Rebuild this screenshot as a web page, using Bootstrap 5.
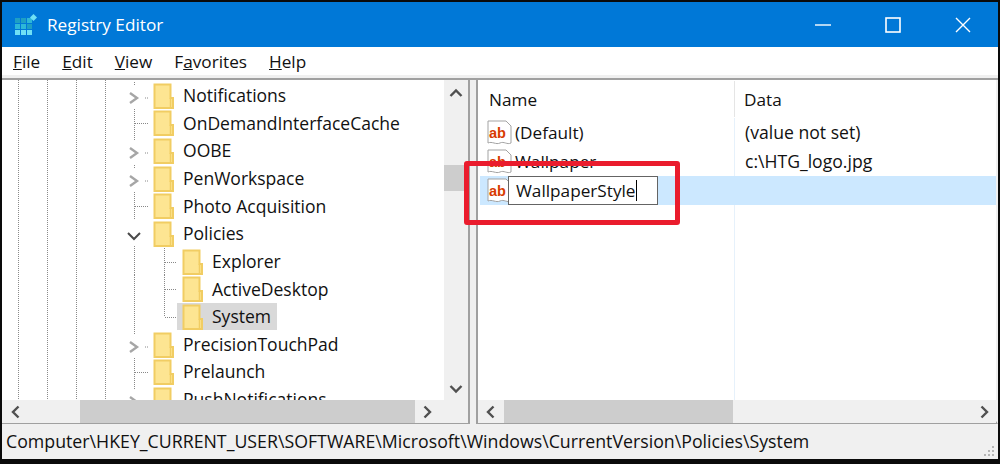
<!DOCTYPE html>
<html lang="en">
<head>
    <meta charset="UTF-8">
    <meta name="viewport" content="width=device-width, initial-scale=1.0">
    <title>Registry Editor</title>
    <link rel="stylesheet" href="https://cdn.jsdelivr.net/npm/bootstrap@5.3.3/dist/css/bootstrap.min.css">
    <style>
        html, body { height: 464px; overflow: hidden; background: #000; }
        body { margin: 0; font-family: "Open Sans", "Liberation Sans", sans-serif; font-size: 17.2px; color: #111; line-height: 1; }

        .win { width: 1000px; height: 464px; padding: 2px 2px 3px; background: #0a0a0a; }

        .titlebar { height: 45px; background: #0078d7; color: #fff; font-size: 17.2px; }
        .titlebar .app-ico { margin: 0 10px 0 13px; }
        .win-btn { width: 70px; height: 45px; }

        .menubar { height: 31px; background: #fff; border-bottom: 3px solid #f0f0f0; padding-top: 2px; }
        .menu-item { padding: 0 11px; }

        .panes { height: 346px; background: #f0f0f0; border-top: 2px solid #a0a0a0; }
        .pane { background: #fff; height: 100%; border-bottom: 3px solid #a0a0a0; }
        .pane-left { width: 468px; border-right: 2px solid #a0a0a0; grid-template-columns: 1fr 24px; grid-template-rows: 320px 23px; }
        .pane-right { width: 522px; margin-left: 6px; border-left: 2px solid #a0a0a0; border-right: 2px solid #f0f0f0; grid-template-rows: 320px 23px; }

        /* tree, the four outer guides are one background */
        .tree {
            padding: 2px 0 0 118px;
            font-size: 17.55px;
            background-image:
                repeating-linear-gradient(to bottom, #8a8a8a 0 1px, transparent 1px 2px),
                repeating-linear-gradient(to bottom, #8a8a8a 0 1px, transparent 1px 2px),
                repeating-linear-gradient(to bottom, #8a8a8a 0 1px, transparent 1px 2px),
                repeating-linear-gradient(to bottom, #8a8a8a 0 1px, transparent 1px 2px);
            background-size: 1px 100%;
            background-position: 16px 0, 45px 0, 74px 0, 103px 0;
            background-repeat: no-repeat;
        }
        .tree-row { height: 27.65px; flex: none; }
        .cell-a { width: 28px; height: 28px; flex: none; }
        .cell-b { width: 29px; height: 28px; flex: none; }
        .tree-label { height: 27px; padding: 0 6px 0 5px; gap: 9px; white-space: nowrap; }
        .tree-label.picked { background: #d9d9d9; }
        .folder { width: 21px; height: 26px; flex: none; }

        /* scrollbars */
        .bar-v { background: #f0f0f0; grid-row: 1 / 3; grid-column: 2; grid-template-rows: 85px 25px 1fr; }
        .bar-h { background: #f0f0f0; }
        .bar-btn { width: 24px; height: 100%; flex: none; }
        .bar-thumb { background: #cdcdcd; }
        .left-pad { width: 54px; }
        .thumb-l { width: 335px; height: 100%; }
        .thumb-r { width: 229px; height: 100%; margin-left: 2px; }

        /* list */
        .list-head { height: 38px; }
        .col-name { width: 257px; padding: 2px 0 0 11px; height: 36px; border-right: 1px solid #e5e5e5; }
        .col-data { padding: 2px 0 0 9px; }
        .list-body {
            background-image: linear-gradient(#e6f1fb, #e6f1fb);
            background-size: 1px 100%;
            background-position: 256px 0;
            background-repeat: no-repeat;
        }
        .val-row { height: 29px; margin-left: 2px; }
        .val-row.active-row { background: #cce8ff; }
        .val-name { width: 255px; padding-left: 7px; gap: 3px; white-space: nowrap; }
        .val-data { padding-left: 10px; font-size: 17.6px; }
        .ab-ico { width: 25px; height: 26px; flex: none; }
        .rename-box { width: 150px; height: 29px; margin-left: -7px; background: #fff; border: 1px solid #646464; padding-left: 7px; position: relative; z-index: 1; }
        .caret-line { width: 1px; height: 21px; background: #000; }
        .red-frame { left: -14px; top: 81px; width: 216px; height: 64px; border: 5px solid #ea1c2d; border-radius: 3px; z-index: 2; }

        .statusbar { height: 35px; background: #f0f0f0; padding-left: 4px; white-space: nowrap; font-size: 17.75px; }
        .grip { right: 2px; bottom: 1px; }
    </style>
</head>
<body>

<svg width="0" height="0" class="position-absolute">
    <defs>
        <symbol id="ico-folder" viewBox="0 0 21 26">
            <path d="M1.5 1.5H17.5V15H20V25H1.5Z" fill="#fde592" stroke="#f1cd63" stroke-width="2"/>
            <path d="M17.5 15V25" stroke="#f1cd63" stroke-width="1.5"/>
        </symbol>
        <symbol id="tw-closed" viewBox="0 0 28 28">
            <path d="M14.5 0V3" stroke="#888" stroke-dasharray="1 1"/>
            <path d="M10 11L17 16L10 21" fill="none" stroke="#a6a6a6" stroke-width="2.4"/>
            <path d="M25 16H29" stroke="#888" stroke-dasharray="1 1"/>
        </symbol>
        <symbol id="tw-open" viewBox="0 0 28 28">
            <path d="M8 13L14 19L20 13" fill="none" stroke="#4a4a4a" stroke-width="2"/>
            <path d="M14.5 26V28" stroke="#888" stroke-dasharray="1 1"/>
        </symbol>
        <symbol id="tw-leaf" viewBox="0 0 28 28">
            <path d="M14.5 0V28" stroke="#888" stroke-dasharray="1 1"/>
            <path d="M15 14.5H29" stroke="#888" stroke-dasharray="1 1"/>
        </symbol>
        <symbol id="tw-pass" viewBox="0 0 28 28">
            <path d="M14.5 0V28" stroke="#888" stroke-dasharray="1 1"/>
        </symbol>
        <symbol id="tw-child" viewBox="0 0 29 28">
            <path d="M16.5 0V28" stroke="#888" stroke-dasharray="1 1"/>
            <path d="M17 14.5H29" stroke="#888" stroke-dasharray="1 1"/>
        </symbol>
        <symbol id="tw-child-end" viewBox="0 0 29 28">
            <path d="M16.5 0V14" stroke="#888" stroke-dasharray="1 1"/>
            <path d="M17 14.5H29" stroke="#888" stroke-dasharray="1 1"/>
        </symbol>
        <symbol id="ico-ab" viewBox="0 0 25 26">
            <path d="M1 1H19L24 6V23C20 25 17 21 13 23C9 25 5 21 1 23Z" fill="#fff" stroke="#a3a3a3"/>
            <text x="2" y="18" font-family="Liberation Sans" font-weight="700" font-size="14.5" fill="#d83b01">ab</text>
        </symbol>
    </defs>
</svg>

<div class="win d-flex flex-column">

    <div class="titlebar d-flex align-items-center">
        <svg class="app-ico" width="22" height="22" viewBox="0 0 22 22">
            <rect x="0" y="4" width="5" height="5" fill="#1e9fc4"/>
            <rect x="6" y="4" width="5" height="5" fill="#1e9fc4"/>
            <rect x="12" y="4" width="5" height="5" fill="#2db7d8"/>
            <rect x="0" y="10" width="5" height="5" fill="#2db7d8"/>
            <rect x="6" y="10" width="5" height="5" fill="#2db7d8"/>
            <rect x="12" y="10" width="5" height="5" fill="#1e9fc4"/>
            <rect x="0" y="16" width="5" height="5" fill="#6fe0f5"/>
            <rect x="6" y="16" width="5" height="5" fill="#6fe0f5"/>
            <rect x="12" y="16" width="5" height="5" fill="#6fe0f5"/>
            <path d="M18.5 0L22 3.5L18.5 7L15 3.5Z" fill="#6fe0f5"/>
        </svg>
        <span class="flex-grow-1">Registry Editor</span>
        <div class="win-btn d-flex align-items-center justify-content-center">
            <svg width="16" height="16" viewBox="0 0 16 16"><path d="M0 8H16" stroke="#fff" stroke-width="1.4"/></svg>
        </div>
        <div class="win-btn d-flex align-items-center justify-content-center">
            <svg width="16" height="16" viewBox="0 0 16 16"><rect x="1" y="1" width="14" height="14" fill="none" stroke="#fff" stroke-width="1.6"/></svg>
        </div>
        <div class="win-btn d-flex align-items-center justify-content-center">
            <svg width="16" height="16" viewBox="0 0 16 16"><path d="M1 1L15 15M15 1L1 15" stroke="#fff" stroke-width="1.4"/></svg>
        </div>
    </div>

    <nav class="menubar d-flex align-items-center">
        <span class="menu-item"><u>F</u>ile</span>
        <span class="menu-item"><u>E</u>dit</span>
        <span class="menu-item"><u>V</u>iew</span>
        <span class="menu-item">F<u>a</u>vorites</span>
        <span class="menu-item"><u>H</u>elp</span>
    </nav>

    <div class="panes d-flex">

        <div class="pane pane-left d-grid">
            <div class="tree d-flex flex-column overflow-hidden">
                <div class="tree-row d-flex align-items-center">
                    <svg class="cell-a"><use href="#tw-closed"/></svg>
                    <div class="tree-label d-flex align-items-center"><svg class="folder"><use href="#ico-folder"/></svg>Notifications</div>
                </div>
                <div class="tree-row d-flex align-items-center">
                    <svg class="cell-a"><use href="#tw-leaf"/></svg>
                    <div class="tree-label d-flex align-items-center"><svg class="folder"><use href="#ico-folder"/></svg>OnDemandInterfaceCache</div>
                </div>
                <div class="tree-row d-flex align-items-center">
                    <svg class="cell-a"><use href="#tw-closed"/></svg>
                    <div class="tree-label d-flex align-items-center"><svg class="folder"><use href="#ico-folder"/></svg>OOBE</div>
                </div>
                <div class="tree-row d-flex align-items-center">
                    <svg class="cell-a"><use href="#tw-closed"/></svg>
                    <div class="tree-label d-flex align-items-center"><svg class="folder"><use href="#ico-folder"/></svg>PenWorkspace</div>
                </div>
                <div class="tree-row d-flex align-items-center">
                    <svg class="cell-a"><use href="#tw-leaf"/></svg>
                    <div class="tree-label d-flex align-items-center"><svg class="folder"><use href="#ico-folder"/></svg>Photo Acquisition</div>
                </div>
                <div class="tree-row d-flex align-items-center">
                    <svg class="cell-a"><use href="#tw-open"/></svg>
                    <div class="tree-label d-flex align-items-center"><svg class="folder"><use href="#ico-folder"/></svg>Policies</div>
                </div>
                <div class="tree-row d-flex align-items-center">
                    <svg class="cell-a"><use href="#tw-pass"/></svg>
                    <svg class="cell-b"><use href="#tw-child"/></svg>
                    <div class="tree-label d-flex align-items-center"><svg class="folder"><use href="#ico-folder"/></svg>Explorer</div>
                </div>
                <div class="tree-row d-flex align-items-center">
                    <svg class="cell-a"><use href="#tw-pass"/></svg>
                    <svg class="cell-b"><use href="#tw-child"/></svg>
                    <div class="tree-label d-flex align-items-center"><svg class="folder"><use href="#ico-folder"/></svg>ActiveDesktop</div>
                </div>
                <div class="tree-row d-flex align-items-center">
                    <svg class="cell-a"><use href="#tw-pass"/></svg>
                    <svg class="cell-b"><use href="#tw-child-end"/></svg>
                    <div class="tree-label picked d-flex align-items-center"><svg class="folder"><use href="#ico-folder"/></svg>System</div>
                </div>
                <div class="tree-row d-flex align-items-center">
                    <svg class="cell-a"><use href="#tw-closed"/></svg>
                    <div class="tree-label d-flex align-items-center"><svg class="folder"><use href="#ico-folder"/></svg>PrecisionTouchPad</div>
                </div>
                <div class="tree-row d-flex align-items-center">
                    <svg class="cell-a"><use href="#tw-leaf"/></svg>
                    <div class="tree-label d-flex align-items-center"><svg class="folder"><use href="#ico-folder"/></svg>Prelaunch</div>
                </div>
                <div class="tree-row d-flex align-items-center">
                    <svg class="cell-a"><use href="#tw-closed"/></svg>
                    <div class="tree-label d-flex align-items-center"><svg class="folder"><use href="#ico-folder"/></svg>PushNotifications</div>
                </div>
            </div>

            <div class="bar-v d-flex flex-column justify-content-between position-relative">
                <div class="d-flex align-items-start justify-content-center pt-2">
                    <svg width="14" height="10" viewBox="0 0 14 10"><path d="M1.5 8L7 2.5L12.5 8" fill="none" stroke="#505050" stroke-width="2.4"/></svg>
                </div>
                <div class="bar-thumb position-absolute w-100" style="top: 85px; height: 26px"></div>
                <div class="d-flex justify-content-center" style="padding-bottom: 29px">
                    <svg width="14" height="10" viewBox="0 0 14 10"><path d="M1.5 2L7 7.5L12.5 2" fill="none" stroke="#505050" stroke-width="2.4"/></svg>
                </div>
            </div>

            <div class="bar-h d-flex" style="grid-row: 2; grid-column: 1">
                <div class="left-pad d-flex align-items-center ps-2">
                    <svg width="11" height="14" viewBox="0 0 11 14"><path d="M8.5 1.5L3 7L8.5 12.5" fill="none" stroke="#505050" stroke-width="2.4"/></svg>
                </div>
                <div class="bar-thumb thumb-l" style="margin-left: 24px"></div>
                <div class="bar-btn d-flex align-items-center justify-content-center">
                    <svg width="11" height="14" viewBox="0 0 11 14"><path d="M2.5 1.5L8 7L2.5 12.5" fill="none" stroke="#505050" stroke-width="2.4"/></svg>
                </div>
            </div>
        </div>

        <div class="pane pane-right d-grid position-relative">
            <div class="overflow-hidden">
                <div class="list-head d-flex align-items-center">
                    <div class="col-name d-flex align-items-center">Name</div>
                    <div class="col-data">Data</div>
                </div>
                <div class="list-body" style="height: 282px">
                    <div class="val-row d-flex align-items-center">
                        <div class="val-name d-flex align-items-center"><svg class="ab-ico"><use href="#ico-ab"/></svg>(Default)</div>
                        <div class="val-data">(value not set)</div>
                    </div>
                    <div class="val-row d-flex align-items-center">
                        <div class="val-name d-flex align-items-center"><svg class="ab-ico"><use href="#ico-ab"/></svg>Wallpaper</div>
                        <div class="val-data">c:\HTG_logo.jpg</div>
                    </div>
                    <div class="val-row active-row d-flex align-items-center">
                        <div class="val-name d-flex align-items-center">
                            <svg class="ab-ico"><use href="#ico-ab"/></svg>
                            <div class="rename-box d-flex align-items-center">WallpaperStyle<span class="caret-line"></span></div>
                        </div>
                    </div>
                </div>
            </div>
            <div class="bar-h d-flex">
                <div class="bar-btn d-flex align-items-center justify-content-center">
                    <svg width="11" height="14" viewBox="0 0 11 14"><path d="M8.5 1.5L3 7L8.5 12.5" fill="none" stroke="#505050" stroke-width="2.4"/></svg>
                </div>
                <div class="bar-thumb thumb-r"></div>
                <div class="flex-grow-1"></div>
                <div class="bar-btn d-flex align-items-center justify-content-center">
                    <svg width="11" height="14" viewBox="0 0 11 14"><path d="M2.5 1.5L8 7L2.5 12.5" fill="none" stroke="#505050" stroke-width="2.4"/></svg>
                </div>
            </div>
            <div class="red-frame position-absolute"></div>
        </div>
    </div>

    <div class="statusbar d-flex align-items-center position-relative">
        Computer\HKEY_CURRENT_USER\SOFTWARE\Microsoft\Windows\CurrentVersion\Policies\System
        <svg class="grip position-absolute" width="13" height="13" viewBox="0 0 13 13">
            <g fill="#b5b5b5">
                <rect x="9" y="1" width="2" height="2"/>
                <rect x="5" y="5" width="2" height="2"/><rect x="9" y="5" width="2" height="2"/>
                <rect x="1" y="9" width="2" height="2"/><rect x="5" y="9" width="2" height="2"/><rect x="9" y="9" width="2" height="2"/>
            </g>
        </svg>
    </div>
</div>

<script src="https://cdn.jsdelivr.net/npm/bootstrap@5.3.3/dist/js/bootstrap.bundle.min.js"></script>
</body>
</html>
